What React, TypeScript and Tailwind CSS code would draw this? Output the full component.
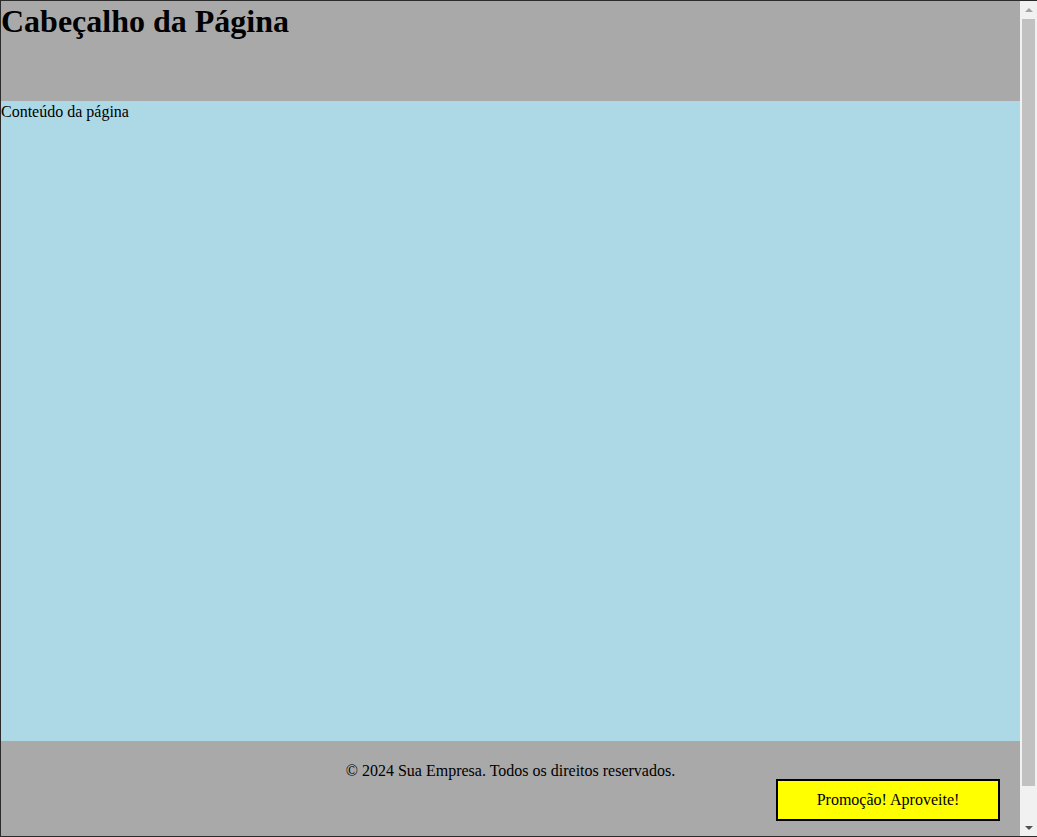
export default function App() {
  return (
    <div className="h-[837px] flex overflow-hidden border-t border-l border-b border-[#2b2b2b] font-['Liberation_Serif',serif] text-black text-[16px]">
      <div className="flex-1 flex flex-col min-w-0">
        <header className="h-[100px] shrink-0 bg-[#a9a9a9] pt-[2px]">
          <h1 className="text-[32px] font-bold leading-[37px]">Cabeçalho da Página</h1>
        </header>
        <main className="h-[640px] shrink-0 bg-[#add8e6] pt-[2px] leading-[18px]">Conteúdo da página</main>
        <footer className="relative flex-1 bg-[#a9a9a9] pt-[21px] text-center leading-[18px]">
          <p>© 2024 Sua Empresa. Todos os direitos reservados.</p>
          <div className="absolute right-[20px] bottom-[15px] w-[224px] border-2 border-black bg-[#ffff00] py-[10px] text-center leading-[18px]">
            Promoção! Aproveite!
          </div>
        </footer>
      </div>
      {/* browser scrollbar */}
      <div className="w-[17px] shrink-0 bg-[#f1f1f1] flex flex-col items-center">
        <div className="h-[17px] w-full flex items-center justify-center">
          <svg width="8" height="4" viewBox="0 0 8 4">
            <polygon points="0,4 8,4 4,0" fill="#a3a3a3" />
          </svg>
        </div>
        <div className="w-full flex-1 px-[2px] pt-[1px] pb-[33px]">
          <div className="h-full w-full bg-[#c1c1c1]" />
        </div>
        <div className="h-[17px] w-full flex items-center justify-center">
          <svg width="8" height="4" viewBox="0 0 8 4">
            <polygon points="0,0 8,0 4,4" fill="#505050" />
          </svg>
        </div>
      </div>
    </div>
  );
}
